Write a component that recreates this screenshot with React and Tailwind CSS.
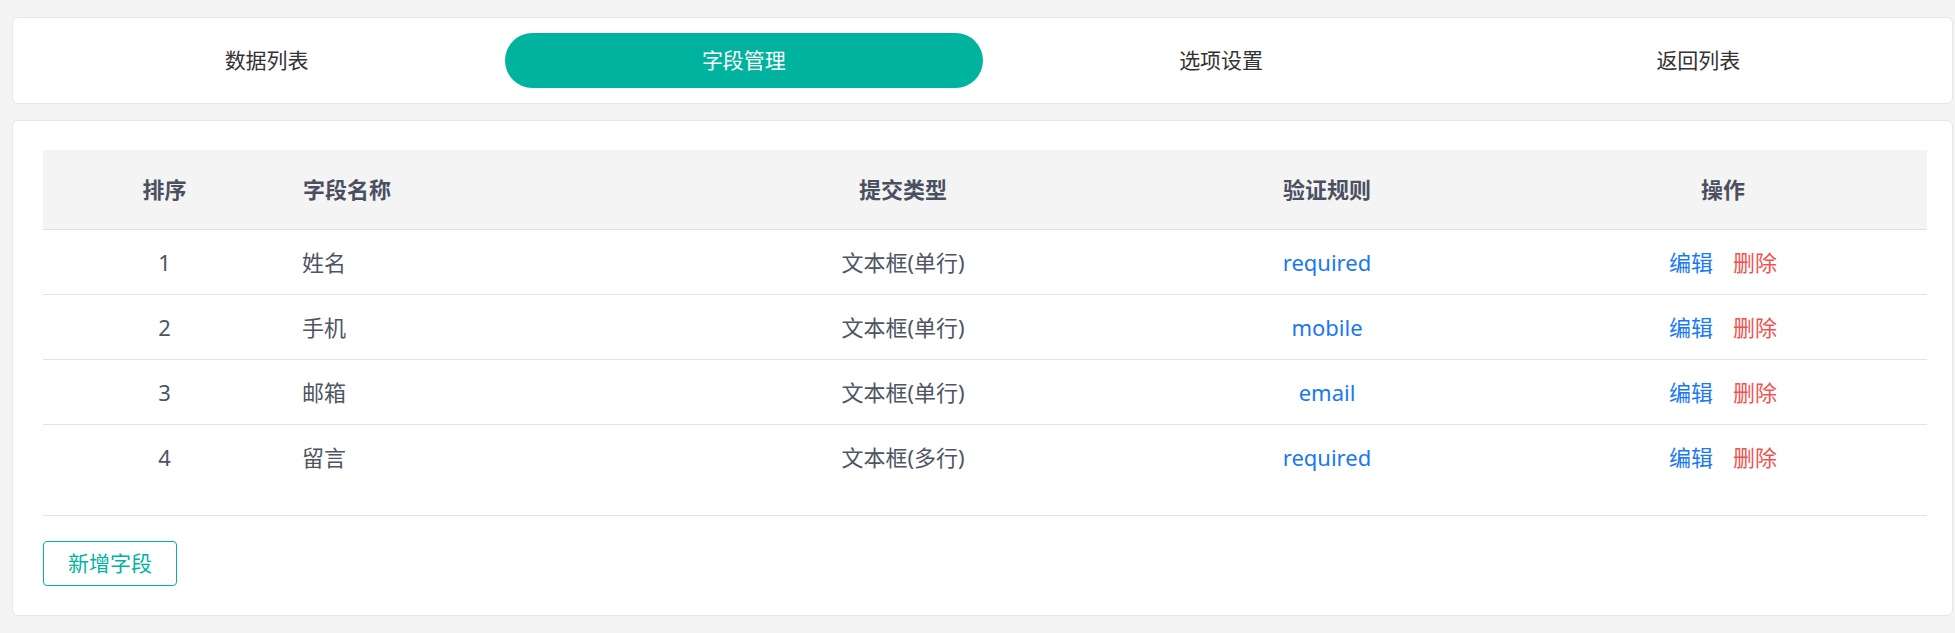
import React from "react";

const tabs = ["数据列表", "字段管理", "选项设置", "返回列表"];
const rows = [
  { no: "1", name: "姓名", type: "文本框(单行)", rule: "required" },
  { no: "2", name: "手机", type: "文本框(单行)", rule: "mobile" },
  { no: "3", name: "邮箱", type: "文本框(单行)", rule: "email" },
  { no: "4", name: "留言", type: "文本框(多行)", rule: "required" },
];

const font = { fontFamily: '"Noto Sans", "Noto Sans CJK SC", sans-serif' };

export default function App() {
  return (
    <div className="min-h-[633px] w-full bg-[#f4f4f4] pt-[17px] pl-[12px] overflow-hidden" style={font}>
      <div className="w-[1941px] flex flex-col gap-[16px]">
        {/* Tabs card */}
        <div className="bg-white border border-[#e6e6e6] rounded-[6px] p-[15px] grid grid-cols-4">
          {tabs.map((t, i) => (
            <div
              key={t}
              className={
                i === 1
                  ? "h-[55px] rounded-full bg-[#00b39f] text-white flex items-center justify-center text-[21px]"
                  : "h-[55px] flex items-center justify-center text-[21px] text-[#333333]"
              }
            >
              {t}
            </div>
          ))}
        </div>

        {/* Table card */}
        <div className="bg-white border border-[#e6e6e6] rounded-[6px] pt-[29px] pb-[29px] pl-[30px] pr-[25px]">
          <div className="grid grid-cols-[243px_385px_464px_384px_408px] h-[80px] bg-[#f4f4f4] border-b border-[#e0e0e4] items-center text-[22px] font-bold text-[#4b5060]">
            <div className="text-center">排序</div>
            <div className="pl-[17px]">字段名称</div>
            <div className="text-center">提交类型</div>
            <div className="text-center">验证规则</div>
            <div className="text-center">操作</div>
          </div>
          <div className="border-b border-[#e3e3e3] pb-[25px]">
            {rows.map((r, i) => (
              <div
                key={r.no}
                className={
                  "grid grid-cols-[243px_385px_464px_384px_408px] h-[65px] items-center text-[22px] text-[#4f5462]" +
                  (i < rows.length - 1 ? " border-b border-[#e3e3e3]" : "")
                }
              >
                <div className="text-center">{r.no}</div>
                <div className="pl-[16px]">{r.name}</div>
                <div className="text-center">{r.type}</div>
                <div className="text-center text-[#1a78f2]">{r.rule}</div>
                <div className="flex justify-center gap-[20px]">
                  <span className="text-[#1a78f2]">编辑</span>
                  <span className="text-[#ef5350]">删除</span>
                </div>
              </div>
            ))}
          </div>
          <div className="pt-[25px]">
            <button className="w-[134px] h-[45px] border border-[#00b39f] rounded-[4px] text-[#00b39f] text-[21px] flex items-center justify-center bg-white">
              新增字段
            </button>
          </div>
        </div>
      </div>
    </div>
  );
}
